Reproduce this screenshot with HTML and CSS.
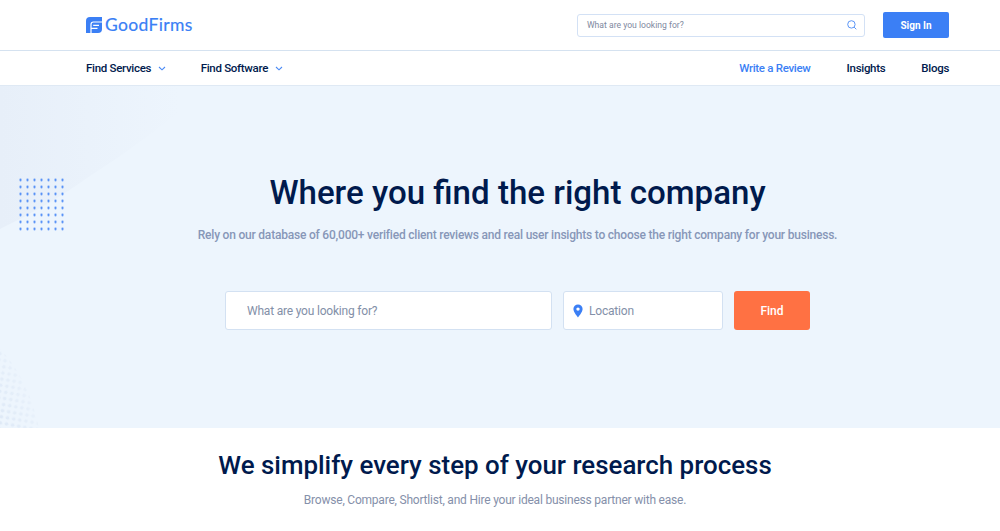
FILE: index.html
```html
<!DOCTYPE html>
<html lang="en">
<head>
    <meta charset="UTF-8">
    <meta name="viewport" content="width=device-width, initial-scale=1.0">
    <title>GoodFirms</title>
    <link rel="stylesheet" href="styles.css">
</head>
<body>
    <header class="top-bar">
        <a class="logo" href="#">
            <svg class="logo-mark" viewBox="0 0 16 16">
                <path fill="#3b7ff5" d="M4 0h12v12a4 4 0 0 1-4 4H0V4a4 4 0 0 1 4-4z"/>
                <path fill="none" stroke="#fff" stroke-width="1.2" d="M16 5H7.400Q5 5 5 7.400V16M7.200 8.300H13M5 11.300h6.500"/>
            </svg>
            <span class="logo-text">GoodFirms</span>
        </a>
        <div class="top-search">
            <span>What are you looking for?</span>
            <svg class="search-icon" viewBox="0 0 10 10">
                <circle cx="4.4" cy="4.4" r="3.7"/>
                <path d="M7.1 7.1l2.2 2.2"/>
            </svg>
        </div>
        <a class="sign-in" href="#">Sign In</a>
    </header>

    <nav class="main-nav">
        <a class="services" href="#">Find Services <svg class="chevron" viewBox="0 0 8 5"><path d="M1 1l3 2.8L7 1"/></svg></a>
        <a class="software" href="#">Find Software <svg class="chevron" viewBox="0 0 8 5"><path d="M1 1l3 2.8L7 1"/></svg></a>
        <a class="review" href="#">Write a Review</a>
        <a class="insights" href="#">Insights</a>
        <a class="blogs" href="#">Blogs</a>
    </nav>

    <section class="hero">
        <!-- Background wedge, blue dot grid and corner halftone -->
        <svg class="hero-decor" viewBox="0 0 220 342">
            <defs>
                <linearGradient id="wedge" x1="0" y1="0" x2="1" y2="0">
                    <stop offset="0" stop-color="#e7eff9"/>
                    <stop offset="0.85" stop-color="#edf5fd"/>
                </linearGradient>
                <pattern id="dots" x="17" y="90.5" width="7" height="7" patternUnits="userSpaceOnUse">
                    <circle cx="3.5" cy="3.5" r="1.15" fill="#3b7ff5"/>
                </pattern>
                <pattern id="halftone" width="6.2" height="6.2" patternUnits="userSpaceOnUse" patternTransform="rotate(10)">
                    <circle cx="3.1" cy="3.1" r="1.8" fill="#dde8f6"/>
                </pattern>
                <linearGradient id="fade" x1="0" y1="1" x2="0.75" y2="0.4">
                    <stop offset="0" stop-color="#fff"/>
                    <stop offset="1" stop-color="#333"/>
                </linearGradient>
                <mask id="corner">
                    <path fill="url(#fade)" d="M0 263Q28 292 39 342H0z"/>
                </mask>
            </defs>
            <path fill="url(#wedge)" d="M0 0h210Q150 52 90 90Q50 119 0 143z"/>
            <path fill="url(#dots)" d="M17 90.5h49v56H17z"/>
            <path fill="url(#halftone)" mask="url(#corner)" d="M0 260h45v82H0z"/>
        </svg>
        <h1>Where you find the right company</h1>
        <p>Rely on our database of 60,000+ verified client reviews and real user insights to choose the right company for your business.</p>
        <div class="search-form">
            <div class="field what">What are you looking for?</div>
            <div class="field location">
                <svg class="pin" viewBox="0 0 10 14"><path fill-rule="evenodd" d="M5 .5a4.600 4.600 0 0 0-4.600 4.600C.4 8.400 5 13.500 5 13.500s4.600-5.100 4.600-8.400A4.600 4.600 0 0 0 5 .5zM5 3.400a1.700 1.700 0 1 1 0 3.400 1.700 1.700 0 0 1 0-3.400z"/></svg>
                <span>Location</span>
            </div>
            <a class="find" href="#">Find</a>
        </div>
    </section>

    <section class="steps">
        <h2>We simplify every step of your research process</h2>
        <p>Browse, Compare, Shortlist, and Hire your ideal business partner with ease.</p>
    </section>
</body>
</html>
```
FILE: styles.css
```css
* {
    box-sizing: border-box;
}

body {
    margin: 0;
    background: #fff;
    color: #001a4d;
    font-family: Roboto, "Liberation Sans", sans-serif;
    overflow: hidden;
}

a {
    color: inherit;
    text-decoration: none;
}

h1, h2, p {
    margin: 0;
    white-space: nowrap;
}

.top-bar {
    display: flex;
    align-items: center;
    height: 51px;
    padding: 0 51px 0 86px;
    border-bottom: 1px solid #d5e2f0;
}

.logo {
    display: flex;
    align-items: center;
    gap: 3px;
    color: #3b7ff5;
}

.logo-mark {
    width: 16px;
    height: 16px;
}

.logo-text {
    font-family: Lato, sans-serif;
    font-size: 17.5px;
    letter-spacing: 0.35px;
    line-height: 20px;
    -webkit-text-stroke: 0.2px #3b7ff5;
}

.top-search {
    display: flex;
    align-items: center;
    justify-content: space-between;
    width: 288px;
    height: 23px;
    margin-left: auto;
    padding: 0 7px 0 9px;
    border: 1px solid #d3e1f5;
    border-radius: 3px;
    color: #8089a0;
    font-size: 8.6px;
}

.search-icon {
    width: 10px;
    height: 10px;
    fill: none;
    stroke: #4a8af5;
    stroke-width: 0.9;
}

.sign-in {
    width: 66px;
    height: 26px;
    margin-left: 18px;
    border-radius: 2px;
    background: #3b7ff5;
    color: #fff;
    font-size: 10px;
    font-weight: 700;
    line-height: 27px;
    text-align: center;
}

.main-nav {
    display: flex;
    align-items: center;
    height: 35px;
    padding: 0 51px 0 86px;
    border-bottom: 1px solid #dfe9f4;
    font-size: 11.5px;
    font-weight: 500;
    letter-spacing: -0.3px;
}

.chevron {
    width: 8px;
    height: 5px;
    margin-left: 4px;
    vertical-align: 1px;
    fill: none;
    stroke: #4a8af5;
    stroke-width: 1.1;
}

.software {
    margin-left: 35px;
}

.review {
    margin-left: auto;
    color: #3b7ff5;
}

.insights,
.blogs {
    margin-left: 36px;
}

.hero {
    position: relative;
    display: flex;
    flex-direction: column;
    align-items: center;
    height: 342px;
    padding: 87px 0 0 35px;
    background: #edf5fd;
}

.hero-decor {
    position: absolute;
    top: 0;
    left: 0;
    width: 220px;
    height: 342px;
}

.hero h1 {
    font-size: 33.1px;
    font-weight: 500;
    line-height: 40px;
}

.hero p {
    margin-top: 14px;
    color: #8797b8;
    font-size: 12px;
    font-weight: 500;
    letter-spacing: -0.21px;
    line-height: 16px;
}

.search-form {
    display: flex;
    margin-top: 48px;
}

.field {
    display: flex;
    align-items: center;
    height: 39px;
    border: 1px solid #d3e1f2;
    border-radius: 3px;
    background: #fff;
    color: #8390a8;
    font-size: 12px;
    letter-spacing: -0.2px;
}

.what {
    width: 327px;
    padding-left: 21px;
}

.location {
    width: 160px;
    margin-left: 11px;
    padding-left: 9px;
}

.pin {
    width: 10px;
    height: 14px;
    margin-right: 6px;
    fill: #3b7ff5;
}

.find {
    width: 76px;
    height: 39px;
    margin-left: 11px;
    border-radius: 3px;
    background: #ff7143;
    color: #fff;
    font-size: 12px;
    font-weight: 500;
    line-height: 40px;
    text-align: center;
}

.steps {
    padding: 21px 10px 0 0;
    text-align: center;
}

.steps h2 {
    font-size: 25.9px;
    font-weight: 500;
    line-height: 32px;
}

.steps p {
    margin-top: 11px;
    color: #8590aa;
    font-size: 12px;
    letter-spacing: -0.21px;
    line-height: 16px;
}
```
